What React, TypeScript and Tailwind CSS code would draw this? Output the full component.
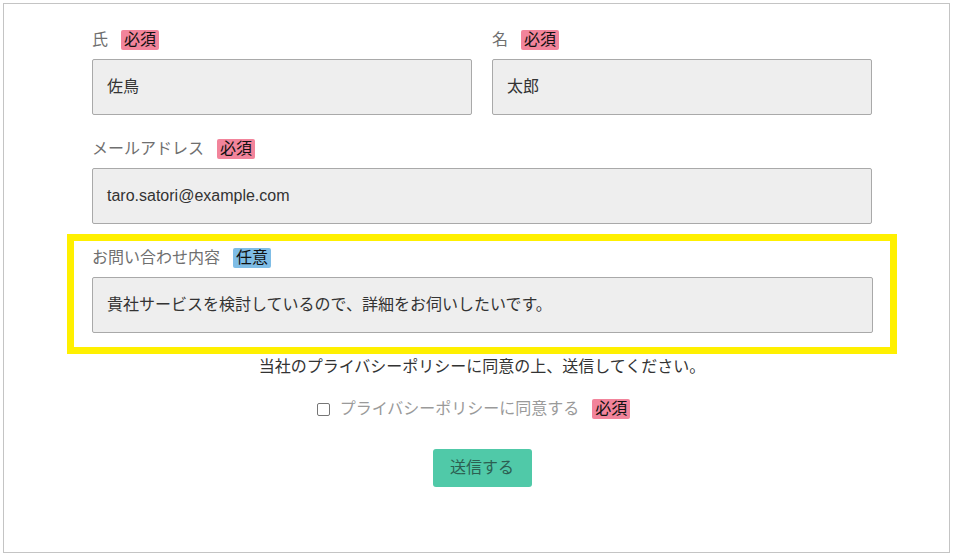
import React from "react";

const font = { fontFamily: '"Liberation Sans", "Noto Sans CJK JP", sans-serif' };

function Badge({ kind }: { kind: "req" | "opt" }) {
  return kind === "req" ? (
    <span className="ml-[13px] inline-flex h-[20px] items-center rounded-[2px] bg-[#f2849b] px-[3px] text-[16px] leading-[20px] text-[#111]">
      必須
    </span>
  ) : (
    <span className="ml-[13px] inline-flex h-[20px] items-center rounded-[2px] bg-[#7fbde6] px-[3px] text-[16px] leading-[20px] text-[#111]">
      任意
    </span>
  );
}

function Label({ text, kind }: { text: string; kind: "req" | "opt" }) {
  return (
    <div className="flex h-[20px] items-center text-[16px] leading-[20px] text-[#6f6f6f]">
      <span>{text}</span>
      <Badge kind={kind} />
    </div>
  );
}

function Field({ value }: { value: string }) {
  return (
    <div className="mt-[9px] flex h-[56px] items-center rounded-[2px] border border-[#a9a9a9] bg-[#eeeeee] px-[14px] text-[16px] text-[#333333]">
      {value}
    </div>
  );
}

export default function App() {
  return (
    <div className="bg-white" style={font}>
      <div className="ml-[3px] mt-[3px] h-[550px] w-[947px] border border-[#c4c4c4] bg-white pt-[26px]">
        <div className="ml-[88px] w-[780px]">
          <div className="grid grid-cols-2 gap-[20px]">
            <div>
              <Label text="氏" kind="req" />
              <Field value="佐鳥" />
            </div>
            <div>
              <Label text="名" kind="req" />
              <Field value="太郎" />
            </div>
          </div>

          <div className="mt-[24px]">
            <Label text="メールアドレス" kind="req" />
            <Field value="taro.satori@example.com" />
          </div>

          <div className="ml-[-25px] mt-[10px] w-[830px] border-[7px] border-[#fff000] pb-[14px] pl-[18px] pr-[17px] pt-[7px]">
            <Label text="お問い合わせ内容" kind="opt" />
            <Field value="貴社サービスを検討しているので、詳細をお伺いしたいです。" />
          </div>

          <p className="mt-[1px] text-center text-[16px] leading-[24px] text-[#333333]">
            当社のプライバシーポリシーに同意の上、送信してください。
          </p>

          <div className="mt-[18px] flex h-[24px] items-center justify-center pr-[17px]">
            <span className="inline-block h-[13px] w-[13px] rounded-[2px] border border-[#767676] bg-white" />
            <span className="ml-[10px] text-[16px] leading-[24px] text-[#9a9a9a]">
              プライバシーポリシーに同意する
            </span>
            <Badge kind="req" />
          </div>

          <div className="mt-[28px] flex justify-center">
            <button className="flex h-[38px] w-[99px] items-center justify-center rounded-[3px] bg-[#50c9a8] text-[16px] text-[#2c5f52]">
              送信する
            </button>
          </div>
        </div>
      </div>
    </div>
  );
}
